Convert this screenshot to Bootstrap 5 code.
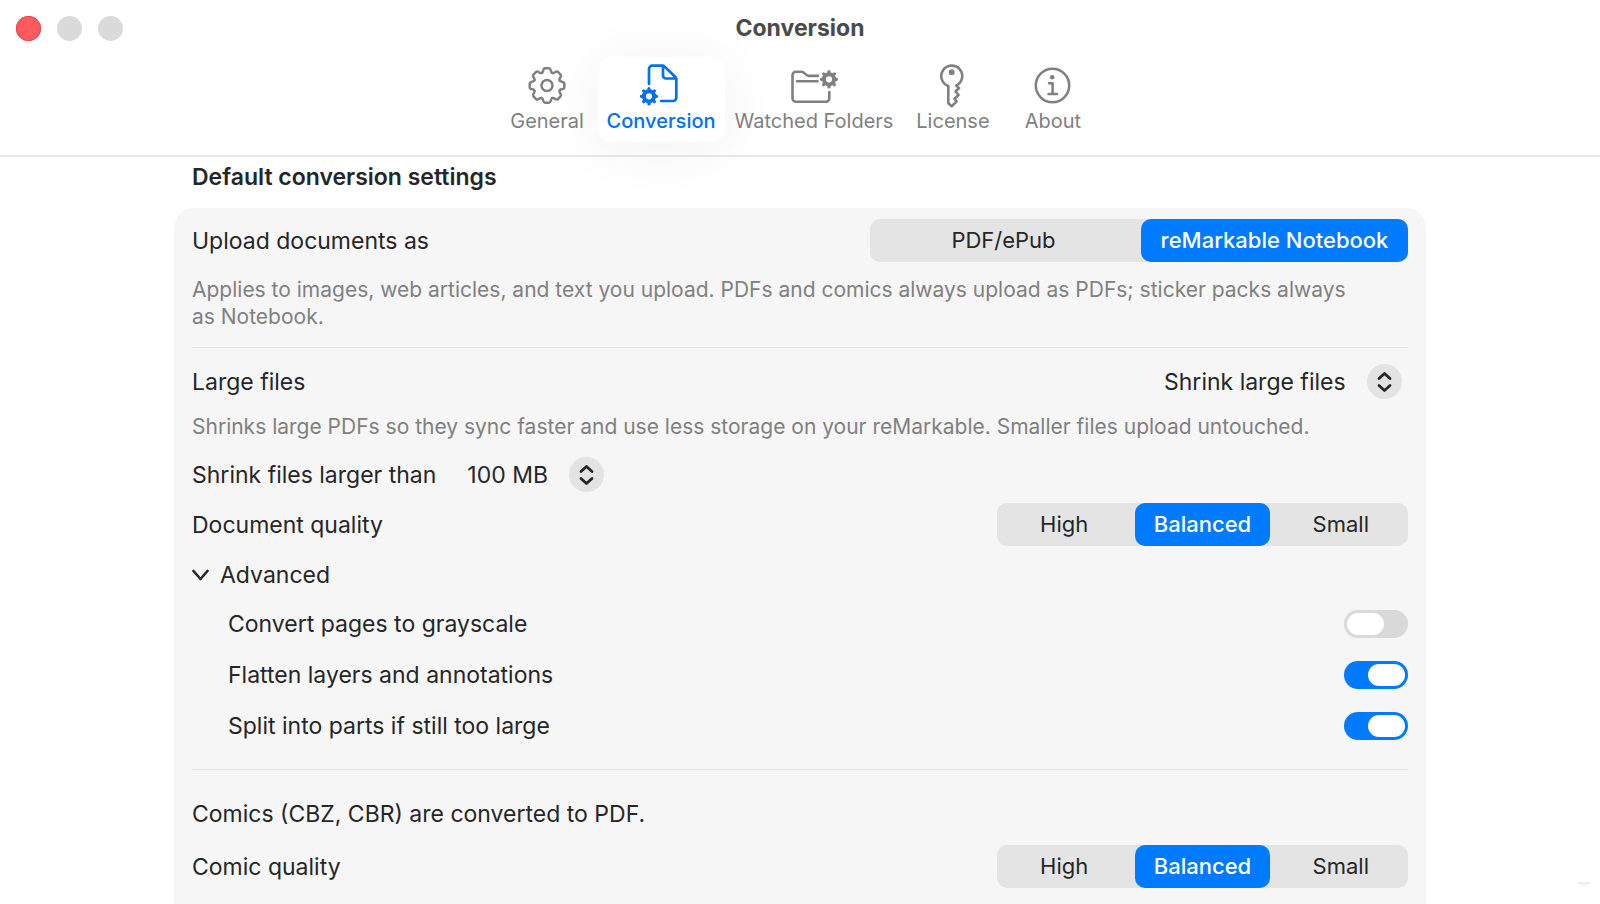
<!DOCTYPE html>
<html lang="en">
<head>
<meta charset="utf-8">
<meta name="viewport" content="width=device-width, initial-scale=1">
<title>Conversion</title>
<link href="https://cdn.jsdelivr.net/npm/bootstrap@5.3.0/dist/css/bootstrap.min.css" rel="stylesheet">
<style>
  :root { --accent: #007aff; --ink: #262626; --muted: #808080; --panel: #f6f6f6; --track: #e4e4e4; }
  body { font-family: Inter, "Liberation Sans", sans-serif; font-size: 23px; line-height: 28px; color: var(--ink); background: #fff; }
  .toolbar { border-bottom: 2px solid #e8e8e8; padding-bottom: 13px; }
  .title-row { display: grid; grid-template-columns: 1fr auto 1fr; padding: 16px 16px 0; height: 41px; }
  .window-title { font-size: 23px; line-height: 24px; font-weight: 700; color: #4a4a4a; }
  .light { width: 25px; height: 25px; padding: 0; border: 0; border-radius: 50%; background: #dadada; }
  .light-close { background: #ff5a5f; box-shadow: inset 0 0 0 1px #e8474c; }
  .tabs { margin-top: 16px; gap: 1px; }
  .tabs .nav-link { min-width: 99px; height: 85px; padding: 7px 9px 8px; border-radius: 14px; font-size: 20px; line-height: 24px; color: var(--muted); text-align: center; white-space: nowrap; }
  .tabs .nav-link svg { display: block; height: 44px; margin: 0 auto 1px; }
  .tabs .nav-link.active { color: #0070f0; background: #fff; font-weight: 500; box-shadow: 0 6px 60px rgba(0, 0, 0, .06); }
  .settings { max-width: 1252px; width: 100%; }
  .section-title { font-size: 23px; line-height: 28px; font-weight: 600; margin: 6px 18px 17px; }
  .panel { background: var(--panel); border-radius: 20px 20px 0 0; padding: 11px 18px 16px; }
  .hint { font-size: 21px; line-height: 27px; color: var(--muted); margin: 14px 0 17px; max-width: 1170px; }
  .rule { margin: 0; border-top: 1px solid #e2e2e2; opacity: 1; }
  .segmented { display: grid; grid-auto-flow: column; grid-auto-columns: 1fr; gap: 4px; height: 43px; background: var(--track); border-radius: 10px; }
  .segmented .btn { --bs-btn-active-bg: var(--accent); --bs-btn-active-color: #fff; --bs-btn-color: var(--ink); border: 0; border-radius: 10px; padding: 0 12px; font-size: 22px; line-height: 43px; white-space: nowrap; }
  .segmented .btn-check:checked + .btn { font-weight: 500; }
  .segmented-3 { width: 411px; }
  .segmented-2 { width: 538px; }
  .picker select { appearance: none; border: 0; background: transparent; color: inherit; font: inherit; height: 35px; padding: 0 56px 0 0; }
  .picker svg { position: absolute; right: 0; top: 0; pointer-events: none; }
  .large-row { padding-right: 6px; }
  .threshold-row { gap: 31px; margin-bottom: 11px; }
  .disclosure { background: none; border: 0; padding: 0; gap: 10px; margin-top: 15px; color: inherit; }
  .options { padding-left: 36px; }
  .option-list { padding: 9px 0 18px; }
  .option-list .option { height: 51px; padding: 0; }
  .comics-note { margin: 30px 0 17px; }
  .toggle.form-check-input { position: relative; float: none; width: 64px; height: 28px; margin: 0; border: 0; border-radius: 14px; background: #d9d9d9; }
  .toggle.form-check-input::before { content: ""; position: absolute; left: 3px; top: 3px; width: 37px; height: 22px; border-radius: 11px; background: #fff; }
  .toggle.form-check-input:checked { background: var(--accent); }
  .toggle.form-check-input:checked::before { left: 24px; }
  .corner-mark { right: 8px; bottom: 18px; }
</style>
</head>
<body class="d-flex flex-column min-vh-100">
<svg class="d-none" aria-hidden="true">
  <symbol id="cog" viewBox="-10 -10 20 20">
    <circle r="5.1" fill="none" stroke="currentColor" stroke-width="4"/>
    <path d="M0-6.5V-7.6M0 6.5V7.6M6.5 0H7.6M-6.5 0H-7.6M4.6-4.6l.8-.8M-4.6-4.6l-.8-.8M4.6 4.6l.8.8M-4.6 4.6l-.8.8" stroke="currentColor" stroke-width="3.2" stroke-linecap="round"/>
  </symbol>
  <symbol id="updown" viewBox="0 0 35 35">
    <circle cx="17.5" cy="17.5" r="17.5" fill="#e3e3e3"/>
    <path d="M12 14.500l5.500-5 5.500 5M12 21.500l5.500 5 5.500-5" fill="none" stroke="#262626" stroke-width="2.8" stroke-linecap="round" stroke-linejoin="round"/>
  </symbol>
</svg>

<header class="toolbar">
  <div class="title-row">
    <div class="d-flex gap-3">
      <button type="button" class="light light-close" aria-label="Close"></button>
      <button type="button" class="light" aria-label="Minimize"></button>
      <button type="button" class="light" aria-label="Zoom"></button>
    </div>
    <h1 class="window-title mb-0">Conversion</h1>
  </div>
  <nav class="nav tabs justify-content-center">
    <a class="nav-link" href="#general">
      <svg width="38" height="44" viewBox="-19 -21.5 38 44" fill="none" stroke="currentColor" stroke-width="2.5" stroke-linecap="round" stroke-linejoin="round" aria-hidden="true">
        <circle r="5.5"/>
        <path id="tooth" d="M-5.200-12.550Q-4-13.050-3.600-15.600Q-3.300-17.300-1.900-17.300H1.900Q3.300-17.300 3.600-15.600Q4-13.050 5.200-12.550"/>
        <use href="#tooth" transform="rotate(45)"/><use href="#tooth" transform="rotate(90)"/><use href="#tooth" transform="rotate(135)"/><use href="#tooth" transform="rotate(180)"/><use href="#tooth" transform="rotate(225)"/><use href="#tooth" transform="rotate(270)"/><use href="#tooth" transform="rotate(315)"/>
      </svg>
      General
    </a>
    <a class="nav-link active" href="#conversion" aria-current="page">
      <svg width="48" height="44" viewBox="1 0 48 44" fill="none" stroke="currentColor" stroke-width="2.7" stroke-linecap="round" stroke-linejoin="round" aria-hidden="true"><path d="M13 20V5a3.300 3.300 0 0 1 3.300-3.300H26.500a3 3 0 0 1 2.100.9L39.400 13a3 3 0 0 1 .9 2.100V33.700a3.300 3.300 0 0 1-3.300 3.300H25M27 2.500V11.500a3 3 0 0 0 3 3H39.500"/><use href="#cog" x="3" y="22.3" width="20" height="20"/></svg>
      Conversion
    </a>
    <a class="nav-link" href="#folders">
      <svg width="52" height="44" viewBox="0 0 52 44" fill="none" stroke="currentColor" stroke-width="2.6" stroke-linecap="round" stroke-linejoin="round" aria-hidden="true"><path d="M41.300 28V34.300a3.500 3.500 0 0 1-3.500 3.500H8a3.500 3.500 0 0 1-3.500-3.500V11.200A3.500 3.500 0 0 1 8 7.700H13.500c3 0 4 4.200 7.500 4.200H30M9 17.300H29.500"/><use href="#cog" x="31" y="5.3" width="20" height="20"/></svg>
      Watched Folders
    </a>
    <a class="nav-link" href="#license">
      <svg width="48" height="44" viewBox="0 0 48 44" fill="none" stroke="currentColor" stroke-width="2.6" stroke-linecap="round" stroke-linejoin="round" aria-hidden="true"><path d="M19.300 22V39.300L22.700 42.200 27.600 37.600 25.400 34.800 29.600 31 26.500 27.300 30 24.300 27.200 21.600A10.500 10.500 0 1 0 19.300 22"/><circle cx="22.7" cy="8.2" r="2.9" fill="currentColor" stroke="none"/></svg>
      License
    </a>
    <a class="nav-link" href="#about">
      <svg width="48" height="44" viewBox="0 0 48 44" fill="none" stroke="currentColor" stroke-width="2.5" stroke-linecap="round" stroke-linejoin="round" aria-hidden="true"><circle cx="23.5" cy="21.5" r="16.7"/><circle cx="23.2" cy="13.3" r="2.3" fill="currentColor" stroke="none"/><path d="M20 19.300H23.600V29.900M19.500 29.900H28"/></svg>
      About
    </a>
  </nav>
</header>

<main class="settings mx-auto flex-grow-1 d-flex flex-column">
  <h2 class="section-title">Default conversion settings</h2>
  <form class="panel flex-grow-1">
    <div class="d-flex justify-content-between align-items-center">
      <span id="upload-label">Upload documents as</span>
      <div class="segmented segmented-2" role="group" aria-labelledby="upload-label">
        <input class="btn-check" type="radio" name="upload" id="upload-pdf"><label class="btn" for="upload-pdf">PDF/ePub</label>
        <input class="btn-check" type="radio" name="upload" id="upload-note" checked><label class="btn" for="upload-note">reMarkable Notebook</label>
      </div>
    </div>
    <p class="hint">Applies to images, web articles, and text you upload. PDFs and comics always upload as PDFs; sticker packs always as Notebook.</p>
    <hr class="rule">

    <div class="large-row d-flex justify-content-between align-items-center mt-3">
      <label for="large-files">Large files</label>
      <div class="picker position-relative">
        <select id="large-files"><option>Shrink large files</option></select>
        <svg width="35" height="35" aria-hidden="true"><use href="#updown"/></svg>
      </div>
    </div>
    <p class="hint">Shrinks large PDFs so they sync faster and use less storage on your reMarkable. Smaller files upload untouched.</p>
    <div class="threshold-row d-flex align-items-center">
      <label for="threshold">Shrink files larger than</label>
      <div class="picker position-relative">
        <select id="threshold"><option>100 MB</option></select>
        <svg width="35" height="35" aria-hidden="true"><use href="#updown"/></svg>
      </div>
    </div>
    <div class="d-flex justify-content-between align-items-center">
      <span id="doc-quality">Document quality</span>
      <div class="segmented segmented-3" role="group" aria-labelledby="doc-quality">
        <input class="btn-check" type="radio" name="docq" id="docq-high"><label class="btn" for="docq-high">High</label>
        <input class="btn-check" type="radio" name="docq" id="docq-bal" checked><label class="btn" for="docq-bal">Balanced</label>
        <input class="btn-check" type="radio" name="docq" id="docq-small"><label class="btn" for="docq-small">Small</label>
      </div>
    </div>
    <button type="button" class="disclosure d-flex align-items-center" data-bs-toggle="collapse" data-bs-target="#advanced" aria-expanded="true" aria-controls="advanced">
      <svg width="18" height="12" viewBox="0 0 18 12" fill="none" stroke="currentColor" stroke-width="2.6" stroke-linecap="round" stroke-linejoin="round" aria-hidden="true"><path d="M1.500 2l7 8 7-8"/></svg>
      Advanced
    </button>
    <div id="advanced" class="options collapse show">
      <div class="option-list">
        <div class="option form-switch d-flex justify-content-between align-items-center">
          <label for="gray">Convert pages to grayscale</label>
          <input class="toggle form-check-input" type="checkbox" role="switch" id="gray">
        </div>
        <div class="option form-switch d-flex justify-content-between align-items-center">
          <label for="flatten">Flatten layers and annotations</label>
          <input class="toggle form-check-input" type="checkbox" role="switch" id="flatten" checked>
        </div>
        <div class="option form-switch d-flex justify-content-between align-items-center">
          <label for="split">Split into parts if still too large</label>
          <input class="toggle form-check-input" type="checkbox" role="switch" id="split" checked>
        </div>
      </div>
    </div>
    <hr class="rule">

    <p class="comics-note">Comics (CBZ, CBR) are converted to PDF.</p>
    <div class="d-flex justify-content-between align-items-center">
      <span id="comic-quality">Comic quality</span>
      <div class="segmented segmented-3" role="group" aria-labelledby="comic-quality">
        <input class="btn-check" type="radio" name="comicq" id="comicq-high"><label class="btn" for="comicq-high">High</label>
        <input class="btn-check" type="radio" name="comicq" id="comicq-bal" checked><label class="btn" for="comicq-bal">Balanced</label>
        <input class="btn-check" type="radio" name="comicq" id="comicq-small"><label class="btn" for="comicq-small">Small</label>
      </div>
    </div>
  </form>
</main>
<svg class="corner-mark position-fixed" width="16" height="4" viewBox="0 0 16 4" aria-hidden="true"><path d="M0 0h16q-8 7-16 0z" fill="#eee"/></svg>
<script src="https://cdn.jsdelivr.net/npm/bootstrap@5.3.0/dist/js/bootstrap.bundle.min.js"></script>
</body>
</html>
